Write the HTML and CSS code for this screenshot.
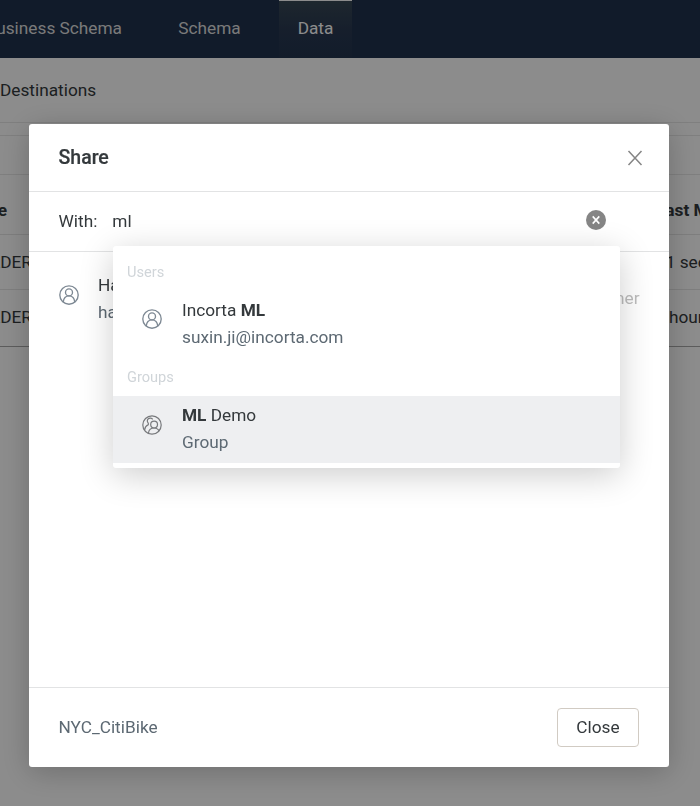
FILE: index.html
```html
<!DOCTYPE html>
<html lang="en">
<head>
<meta charset="utf-8">
<title>Share</title>
<link rel="stylesheet" href="styles.css">
</head>
<body>
<div class="page">
  <nav class="nav">
    <a class="nav-item first">Business Schema</a>
    <a class="nav-item">Schema</a>
    <a class="nav-item active">Data</a>
  </nav>
  <div class="subnav">Destinations</div>
  <div class="toolbar"></div>
  <div class="table">
    <div class="row head"><span class="cell type">Type</span><span class="cell modified">Last Modified</span></div>
    <div class="row"><span class="cell type">LOADER</span><span class="cell modified">21 seconds</span></div>
    <div class="row last"><span class="cell type">LOADER</span><span class="cell modified">1 hour ago</span></div>
  </div>
</div>
<div class="overlay">
  <section class="modal">
    <header class="modal-head">
      <h1>Share</h1>
      <svg class="close-icon" viewBox="0 0 16 16"><path d="M1.5 1l13 14M14.5 1l-13 14"/></svg>
    </header>
    <div class="search">
      <span class="label">With:</span>
      <span class="value">ml</span>
      <svg class="clear" viewBox="0 0 20 20"><circle cx="10" cy="10" r="10"/><path d="M6.7 6.4l6.6 7.2M13.3 6.4l-6.6 7.2"/></svg>
      <div class="dropdown">
        <div class="group-label">Users</div>
        <div class="option">
          <svg class="avatar" viewBox="0 0 20 20"><circle cx="10" cy="10" r="9.2"/><circle cx="10" cy="7.4" r="3.5"/><path d="M4.2 17.2c.4-3.9 2.6-6.3 5.8-6.3s5.4 2.4 5.8 6.3"/></svg>
          <div class="lines"><div class="name">Incorta <b>ML</b></div><div class="detail">suxin.ji@incorta.com</div></div>
        </div>
        <div class="group-label second">Groups</div>
        <div class="option selected">
          <svg class="avatar group" viewBox="0 0 20 20"><circle cx="10" cy="10" r="9.2"/><circle cx="12.1" cy="9.6" r="3.4"/><path d="M6.5 18.2c.2-3.2 2.3-5.2 5.6-5.2 2.6 0 4.3 1.3 5.2 3.3M10.7 4.4C9.8 2.9 7.6 2.6 6.3 3.8c-1.4 1.3-1.2 3.2 0 4.4v1.6C4.2 10.6 3 12 2.6 14.8"/></svg>
          <div class="lines"><div class="name"><b>ML</b> Demo</div><div class="detail">Group</div></div>
        </div>
      </div>
    </div>
    <div class="members">
      <div class="member">
        <svg class="avatar" viewBox="0 0 20 20"><circle cx="10" cy="10" r="9.2"/><circle cx="10" cy="7.4" r="3.5"/><path d="M4.2 17.2c.4-3.9 2.6-6.3 5.8-6.3s5.4 2.4 5.8 6.3"/></svg>
        <div class="lines"><div class="name">Ha</div><div class="detail">ha</div></div>
        <span class="role">Owner</span>
      </div>
    </div>
    <footer class="modal-foot">
      <span>NYC_CitiBike</span>
      <button class="button">Close</button>
    </footer>
  </section>
</div>
</body>
</html>
```
FILE: styles.css
```css
* { box-sizing: border-box; }
body {
  margin: 0;
  height: 806px;
  overflow: hidden;
  background: #fff;
  color: #34393c;
  font: 17.25px/27px Roboto, sans-serif;
}
.page { height: 806px; overflow: hidden; background: #fff; }
.nav {
  display: flex;
  height: 58px;
  background: #20324e;
  color: #dedede;
  line-height: 56px;
}
.nav-item { width: 137px; text-align: center; }
.nav-item.first { display: flex; justify-content: flex-end; width: 122px; margin-right: 19px; white-space: nowrap; }
.nav-item.active {
  width: 73px;
  margin-left: 1px;
  border-top: 1px solid #fff;
  line-height: 54px;
  color: #fff;
  background: linear-gradient(#374855, #293951 50%, #22334e);
}
.subnav { height: 65px; line-height: 64px; border-bottom: 1px solid #e8e8e8; }
.toolbar { height: 52px; border-bottom: 1px solid #e8e8e8; background: linear-gradient(#e8e8e8, #e8e8e8) 0 12px / 100% 1px no-repeat; }
.table { border-bottom: 1px solid #a8a8a8; }
.row { display: flex; justify-content: space-between; height: 55px; line-height: 54px; border-bottom: 1px solid #e6e6e6; white-space: nowrap; overflow: hidden; }
.row.head { height: 60px; line-height: 71px; font-weight: 700; }
.row.last { height: 56px; border-bottom: 0; }
.cell.type { display: flex; justify-content: flex-end; width: 32px; }
.head .type { width: 7px; }
.cell.modified { width: 44px; }
.last .modified { width: 45px; }
.overlay {
  position: fixed;
  inset: 0;
  padding: 124px 31px 0 29px;
  background: rgba(0, 0, 0, .45);
}
.modal {
  display: flex;
  flex-direction: column;
  height: 643px;
  border-radius: 3px;
  background: #fff;
  box-shadow: 0 5px 30px rgba(0, 0, 0, .22);
}
.modal-head {
  display: flex;
  align-items: center;
  justify-content: space-between;
  height: 68px;
  padding: 0 26.5px 0 29.5px;
  border-bottom: 1px solid #e2e3e4;
}
h1 { margin: 0; font-size: 19.5px; font-weight: 500; -webkit-text-stroke: .2px; }
.close-icon { width: 16px; height: 16px; fill: none; stroke: #858585; stroke-width: 1.5; }
.search {
  position: relative;
  display: flex;
  align-items: center;
  height: 60px;
  padding: 0 63px 0 29.5px;
  border-bottom: 1px solid #e2e3e4;
}
.value { margin-left: 15px; }
.clear { width: 20px; height: 20px; margin: -4px 0 0 auto; fill: #858585; }
.clear path { fill: none; stroke: #fff; stroke-width: 1.6; }
.dropdown {
  position: absolute;
  z-index: 1;
  top: 54px;
  left: 84px;
  width: 507px;
  height: 222px;
  border-radius: 3px;
  background: #fff;
  box-shadow: 0 7px 34px rgba(0, 0, 0, .2);
}
.group-label { height: 45px; padding-left: 14px; font-size: 14.6px; line-height: 52px; color: #d0d5d9; }
.group-label.second { height: 39px; line-height: 40px; }
.option { display: flex; height: 66px; padding: 6px 0 0 29px; }
.option.selected { height: 67px; background: #eeeff1; }
.lines { margin-left: 20px; }
.avatar { flex: none; width: 20px; height: 20px; margin-top: 12.5px; fill: none; stroke: #7e8994; stroke-width: 1.35; }
.option:not(.selected) .avatar { margin-top: 12px; }
.avatar.group { stroke: #77797c; stroke-width: 1.2; }
.detail { color: #5d6973; }
.members { flex: 1; }
.member { display: flex; padding: 20px 29.5px; }
.member .lines { margin-left: 19.5px; }
.role { margin: 13px 0 0 auto; color: #bdbdbd; }
.modal-foot {
  display: flex;
  align-items: center;
  justify-content: space-between;
  height: 80px;
  padding: 0 30px 0 29.5px;
  border-top: 1px solid #e2e3e4;
  color: #5d6973;
}
.button {
  width: 82px;
  height: 39px;
  padding: 0 0 2px;
  border: 1px solid #d1cbc3;
  border-radius: 4px;
  background: #fff;
  color: #34393c;
  font: 17.25px Roboto, sans-serif;
}
```
